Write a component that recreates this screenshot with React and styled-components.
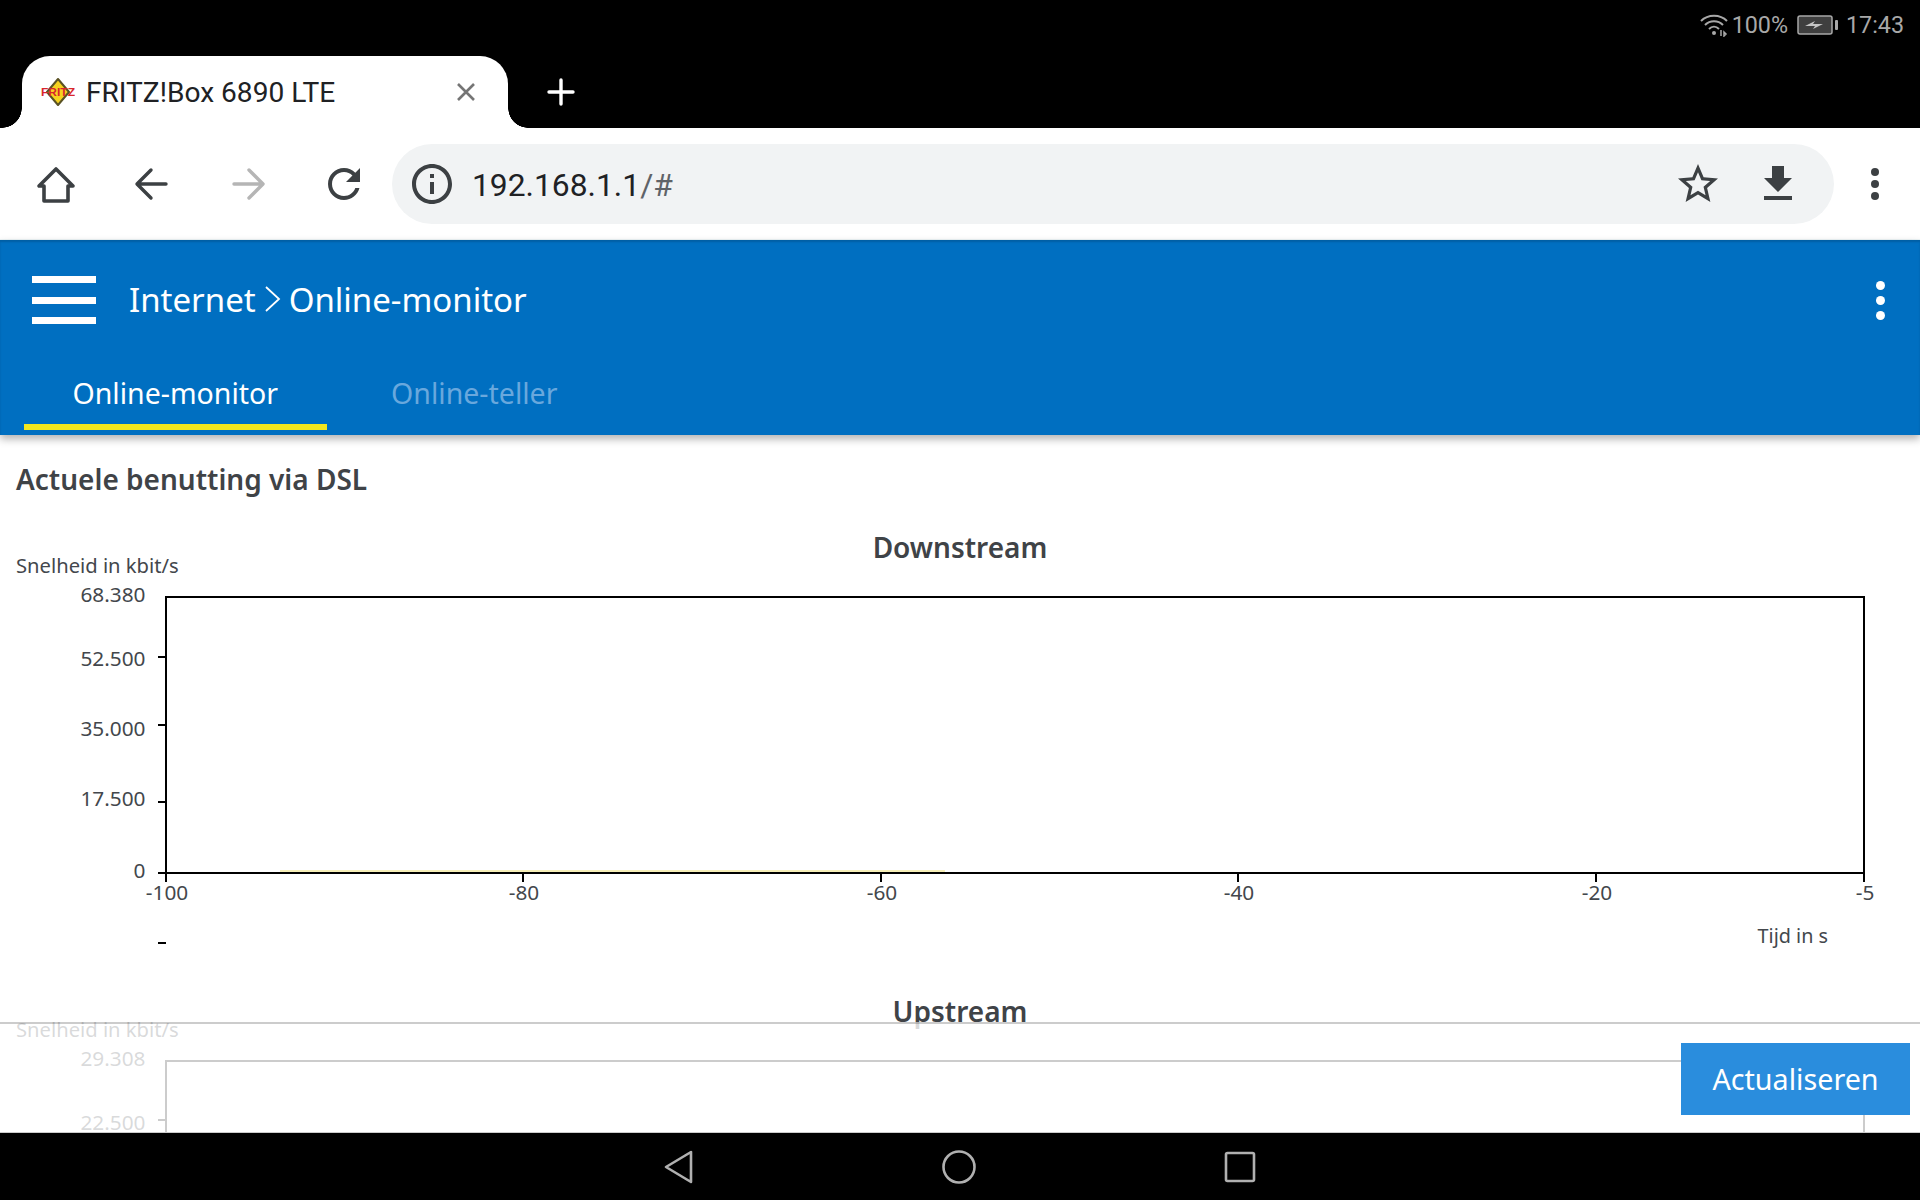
import React from "react";
import styled, { createGlobalStyle } from "styled-components";

const downstreamTicks = [
  { label: "68.380", tick: null, text: 44 },
  { label: "52.500", tick: 99, text: 108 },
  { label: "35.000", tick: 167, text: 178 },
  { label: "17.500", tick: 244, text: 248 },
  { label: "0", tick: 315, text: 320 },
];

const upstreamTicks = [
  { label: "29.308", tick: null, text: 44 },
  { label: "22.500", tick: 98, text: 108 },
];

const timeTicks = [
  { label: "-100", x: 166 },
  { label: "-80", x: 523 },
  { label: "-60", x: 881 },
  { label: "-40", x: 1238 },
  { label: "-20", x: 1596 },
  { label: "-5", x: 1864 },
];

function Chart({ title, ticks, complete }) {
  return (
    <ChartBlock>
      <ChartTitle>{title}</ChartTitle>
      <ChartSvg viewBox="0 0 1920 442">
        <text x="16" y="15" fontSize="20.2">Snelheid in kbit/s</text>
        {ticks.map((t) => (
          <g key={t.label}>
            <text x="145.5" y={t.text} fontSize="20.8" textAnchor="end">{t.label}</text>
            {t.tick && <line x1="158" x2="166" y1={t.tick} y2={t.tick} stroke="#000" strokeWidth="2" />}
          </g>
        ))}
        <rect x="166" y="39" width="1698" height="276" fill="none" stroke="#000" strokeWidth="2" />
        {complete && (
          <>
            <line x1="280" x2="945" y1="313" y2="313" stroke="#f6efb8" strokeWidth="2" />
            {timeTicks.map((t) => (
              <g key={t.label}>
                <line x1={t.x} x2={t.x} y1="315" y2="324" stroke="#000" strokeWidth="2" />
                <text x={t.x + 1} y="342" fontSize="20.8" textAnchor="middle">{t.label}</text>
              </g>
            ))}
            <line x1="158" x2="166" y1="385" y2="385" stroke="#000" strokeWidth="2" />
            <text x="1828" y="385" fontSize="19.8" textAnchor="end">Tijd in s</text>
          </>
        )}
      </ChartSvg>
    </ChartBlock>
  );
}

function App() {
  return (
    <Screen>
      <GlobalStyle />
      <TopBar>
        <StatusBar>
          <svg width="28" height="24" viewBox="0 0 28 24" fill="none" stroke="#a8a8a8" strokeWidth="2">
            <path d="M1 8C8 1 20 1 27 8" />
            <path d="M5 12C10 7 18 7 23 12" />
            <path d="M9 16C12 13 16 13 19 16" />
            <circle cx="14" cy="20" r="2" fill="#a8a8a8" stroke="none" />
            <path d="M21 17v6M24 19l2 2-2 2z" strokeWidth="1.5" />
          </svg>
          <StatusText>100%</StatusText>
          <BatteryIcon width="41" height="20" viewBox="0 0 41 20">
            <rect x="1" y="1" width="34" height="18" rx="2" fill="#3f3f3f" stroke="#a8a8a8" strokeWidth="1.5" />
            <rect x="38" y="5" width="3" height="10" rx="1" fill="#a8a8a8" />
            <path d="M8 11l10-5-2 3h10l-10 5 2-3z" fill="#c4c4c4" />
          </BatteryIcon>
          <StatusText>17:43</StatusText>
        </StatusBar>
        <TabStrip>
          <BrowserTab>
            <svg width="34" height="28" viewBox="0 0 34 28">
              <path d="M17 1l11 13-11 13L6 14z" fill="#f6d21f" stroke="#5a5224" strokeWidth="2" strokeLinejoin="round" />
              <FaviconText x="0" y="18" textLength="34" lengthAdjust="spacingAndGlyphs">FRITZ</FaviconText>
            </svg>
            <TabTitle>FRITZ!Box 6890 LTE</TabTitle>
            <TabClose>
              <svg width="20" height="20" viewBox="0 0 20 20" stroke="#757575" strokeWidth="2.6">
                <path d="M2 2l16 16M18 2L2 18" />
              </svg>
            </TabClose>
          </BrowserTab>
          <NewTab>
            <svg width="28" height="28" viewBox="0 0 28 28" stroke="#fff" strokeWidth="3.4" strokeLinecap="round">
              <path d="M14 2v24M2 14h24" />
            </svg>
          </NewTab>
        </TabStrip>
      </TopBar>

      <Toolbar>
        <ToolButton>
          <svg width="48" height="48" viewBox="0 0 48 48" fill="none" stroke="#3c4043" strokeWidth="3.6" strokeLinejoin="round">
            <path d="M24 9L7 26h5v15h24V26h5z" />
          </svg>
        </ToolButton>
        <ToolButton>
          <svg width="48" height="48" viewBox="0 0 48 48" fill="none" stroke="#3c4043" strokeWidth="3.4" strokeLinecap="round" strokeLinejoin="round">
            <path d="M38 24H10M23 10L9 24l14 14" />
          </svg>
        </ToolButton>
        <ToolButton>
          <svg width="48" height="48" viewBox="0 0 48 48" fill="none" stroke="#b5b5b5" strokeWidth="3.4" strokeLinecap="round" strokeLinejoin="round">
            <path d="M10 24h28M25 10l14 14-14 14" />
          </svg>
        </ToolButton>
        <ToolButton>
          <svg width="48" height="48" viewBox="0 0 24 24" fill="#3c4043">
            <path d="M17.65 6.35C16.2 4.9 14.21 4 12 4c-4.42 0-7.99 3.58-7.99 8s3.57 8 7.99 8c3.73 0 6.84-2.55 7.73-6h-2.08c-.82 2.33-3.04 4-5.65 4-3.31 0-6-2.69-6-6s2.69-6 6-6c1.66 0 3.14.69 4.22 1.78L13 11h7V4l-2.35 2.35z" />
          </svg>
        </ToolButton>
        <Omnibox>
          <svg width="48" height="48" viewBox="0 0 24 24" fill="#3c4043">
            <path d="M11 7h2v2h-2zm0 4h2v6h-2zm1-9C6.48 2 2 6.48 2 12s4.48 10 10 10 10-4.48 10-10S17.52 2 12 2zm0 18c-4.41 0-8-3.59-8-8s3.59-8 8-8 8 3.59 8 8-3.59 8-8 8z" />
          </svg>
          <Url>192.168.1.1<UrlRest>/#</UrlRest></Url>
          <svg width="48" height="48" viewBox="0 0 24 24" fill="#3c4043">
            <path d="M22 9.24l-7.19-.62L12 2 9.19 8.63 2 9.24l5.46 4.73L5.82 21 12 17.27 18.18 21l-1.63-7.03L22 9.24zM12 15.4l-3.76 2.27 1-4.28-3.32-2.88 4.38-.38L12 6.1l1.71 4.04 4.38.38-3.32 2.88 1 4.28L12 15.4z" />
          </svg>
          <svg width="48" height="48" viewBox="0 0 24 24" fill="#3c4043">
            <path d="M19 9h-4V3H9v6H5l7 7 7-7zM5 18v2h14v-2H5z" />
          </svg>
        </Omnibox>
        <MenuDots $color="#3c4043" $size={8} $gap={4} $width={81} />
      </Toolbar>

      <Header>
        <TitleRow>
          <Hamburger><span /><span /><span /></Hamburger>
          <Breadcrumb>
            Internet
            <Chevron width="16" height="26" viewBox="0 0 16 26" fill="none" stroke="#fff" strokeWidth="1.8">
              <path d="M1 1l13 12L1 25" />
            </Chevron>
            Online-monitor
          </Breadcrumb>
          <MenuDots $color="#fff" $size={9} $gap={6} $width={80} />
        </TitleRow>
        <Tabs>
          <TabItem $active>Online-monitor</TabItem>
          <TabItem>Online-teller</TabItem>
        </Tabs>
      </Header>

      <Content>
        <Heading>Actuele benutting via DSL</Heading>
        <Chart title="Downstream" ticks={downstreamTicks} complete />
        <Chart title="Upstream" ticks={upstreamTicks} />
        <Footer>
          <RefreshButton>Actualiseren</RefreshButton>
        </Footer>
      </Content>

      <NavBar>
        <svg width="30" height="34" viewBox="0 0 30 34" fill="none" stroke="#b0b0b0" strokeWidth="2.6" strokeLinejoin="round">
          <path d="M27 2v30L2 17z" />
        </svg>
        <svg width="36" height="36" viewBox="0 0 36 36" fill="none" stroke="#b0b0b0" strokeWidth="2.6">
          <circle cx="18" cy="18" r="15.5" />
        </svg>
        <svg width="32" height="32" viewBox="0 0 32 32" fill="none" stroke="#b0b0b0" strokeWidth="2.6" strokeLinejoin="round">
          <rect x="2" y="2" width="28" height="28" rx="1.5" />
        </svg>
      </NavBar>
    </Screen>
  );
}

function MenuDots({ $color, $size, $gap, $width }) {
  return (
    <Dots $width={$width} $gap={$gap}>
      <Dot $color={$color} $size={$size} />
      <Dot $color={$color} $size={$size} />
      <Dot $color={$color} $size={$size} />
    </Dots>
  );
}

const GlobalStyle = createGlobalStyle`
  html, body {
    margin: 0;
    padding: 0;
    background: #fff;
  }
  * {
    box-sizing: border-box;
  }
`;

const Screen = styled.div`
  width: 1920px;
  height: 1200px;
  display: flex;
  flex-direction: column;
  overflow: hidden;
  font-family: "Noto Sans", sans-serif;
`;

const TopBar = styled.div`
  height: 128px;
  background: #000;
  display: flex;
  flex-direction: column;
  justify-content: space-between;
`;

const StatusBar = styled.div`
  height: 50px;
  display: flex;
  align-items: center;
  justify-content: flex-end;
  padding-right: 16px;
  svg {
    flex: none;
  }
`;

const BatteryIcon = styled.svg`
  margin: 0 4px 0 9px;
`;

const StatusText = styled.span`
  font-family: Roboto, sans-serif;
  font-size: 23.3px;
  color: #a8a8a8;
  margin-left: 4px;
`;

const TabStrip = styled.div`
  display: flex;
  align-items: center;
  padding-left: 22px;
`;

const BrowserTab = styled.div`
  position: relative;
  width: 486px;
  height: 72px;
  background: #fff;
  border-radius: 28px 28px 0 0;
  display: flex;
  align-items: center;
  padding-left: 19px;
  &::before,
  &::after {
    content: "";
    position: absolute;
    bottom: 0;
    width: 20px;
    height: 20px;
  }
  &::before {
    left: -20px;
    background: radial-gradient(circle at 0 0, transparent 19.5px, #fff 20px);
  }
  &::after {
    right: -20px;
    background: radial-gradient(circle at 100% 0, transparent 19.5px, #fff 20px);
  }
`;

const FaviconText = styled.text`
  font-family: "Liberation Sans", sans-serif;
  font-size: 11px;
  font-weight: 700;
  fill: #d8262c;
`;

const TabTitle = styled.span`
  font-family: Roboto, sans-serif;
  font-size: 28.1px;
  color: #202124;
  margin-left: 11px;
  flex: 1;
`;

const TabClose = styled.span`
  display: flex;
  margin-right: 32px;
`;

const NewTab = styled.span`
  display: flex;
  margin: 0 0 0 39px;
`;

const Toolbar = styled.div`
  height: 112px;
  background: #fff;
  display: flex;
  align-items: center;
  padding-left: 8px;
  border-bottom: 1px solid #eef6f8;
`;

const ToolButton = styled.div`
  width: 96px;
  display: flex;
  justify-content: center;
`;

const Omnibox = styled.div`
  width: 1442px;
  height: 80px;
  background: #f1f3f4;
  border-radius: 40px;
  display: flex;
  align-items: center;
  gap: 32px;
  padding: 0 32px 0 16px;
`;

const Url = styled.div`
  flex: 1;
  font-family: Roboto, sans-serif;
  font-size: 31.8px;
  color: #202124;
  margin-left: -16px;
  padding-top: 2px;
`;

const UrlRest = styled.span`
  color: #5f6368;
`;

const Dots = styled.div`
  width: ${(p) => p.$width}px;
  display: flex;
  flex-direction: column;
  align-items: center;
  gap: ${(p) => p.$gap}px;
  flex: none;
`;

const Dot = styled.span`
  width: ${(p) => p.$size}px;
  height: ${(p) => p.$size}px;
  border-radius: 50%;
  background: ${(p) => p.$color};
`;

const Header = styled.header`
  position: relative;
  z-index: 1;
  height: 195px;
  background: #006fc1;
  box-shadow: inset 0 2px 2px rgba(0, 0, 0, 0.15), 0 4px 8px rgba(0, 0, 0, 0.3);
  display: flex;
  flex-direction: column;
  justify-content: space-between;
  padding-bottom: 5px;
`;

const TitleRow = styled.div`
  height: 120px;
  display: flex;
  align-items: center;
  padding-left: 32px;
`;

const Hamburger = styled.div`
  width: 64px;
  height: 48px;
  display: flex;
  flex-direction: column;
  justify-content: space-between;
  span {
    height: 7px;
    background: #fff;
  }
`;

const Breadcrumb = styled.div`
  flex: 1;
  margin: 0 0 2px 33px;
  display: flex;
  align-items: center;
  font-size: 33px;
  color: #fff;
`;

const Chevron = styled.svg`
  margin: 0 8px 0 9px;
`;

const Tabs = styled.nav`
  display: flex;
  gap: 16px;
  padding-left: 24px;
`;

const TabItem = styled.div`
  height: 64px;
  padding: 0 48.5px 5px;
  display: flex;
  align-items: center;
  font-size: 28.5px;
  color: ${(p) => (p.$active ? "#fff" : "#69a8dd")};
  border-bottom: 6px solid ${(p) => (p.$active ? "#f2e61e" : "transparent")};
`;

const Content = styled.main`
  position: relative;
  flex: 1;
  overflow: hidden;
  background: #fff;
`;

const Heading = styled.h1`
  margin: 24px 0 37px 16px;
  font-size: 28px;
  line-height: 40px;
  font-weight: 600;
  color: #3f4347;
`;

const ChartBlock = styled.section`
  height: 464px;
`;

const ChartTitle = styled.h2`
  margin: 0;
  text-align: center;
  font-size: 28px;
  line-height: 22px;
  font-weight: 600;
  color: #3f4347;
`;

const ChartSvg = styled.svg`
  display: block;
  width: 1920px;
  height: 442px;
  overflow: visible;
  text {
    font-family: "Noto Sans", sans-serif;
    fill: #43474c;
  }
`;

const Footer = styled.div`
  position: absolute;
  left: 0;
  right: 0;
  bottom: 0;
  height: 110px;
  background: rgba(255, 255, 255, 0.8);
  border-top: 2px solid rgba(0, 0, 0, 0.2);
  display: flex;
  justify-content: flex-end;
  padding: 19px 10px 0 0;
`;

const RefreshButton = styled.button`
  width: 229px;
  height: 72px;
  border: none;
  background: #2a8ddd;
  color: #fff;
  font-family: "Noto Sans", sans-serif;
  font-size: 28.7px;
  padding: 0 0 2px;
`;

const NavBar = styled.nav`
  height: 68px;
  background: #000;
  border-top: 1px solid #ccc;
  display: grid;
  grid-template-columns: 30px 36px 32px;
  justify-content: center;
  align-items: center;
  column-gap: 247px;
`;

export default App;
